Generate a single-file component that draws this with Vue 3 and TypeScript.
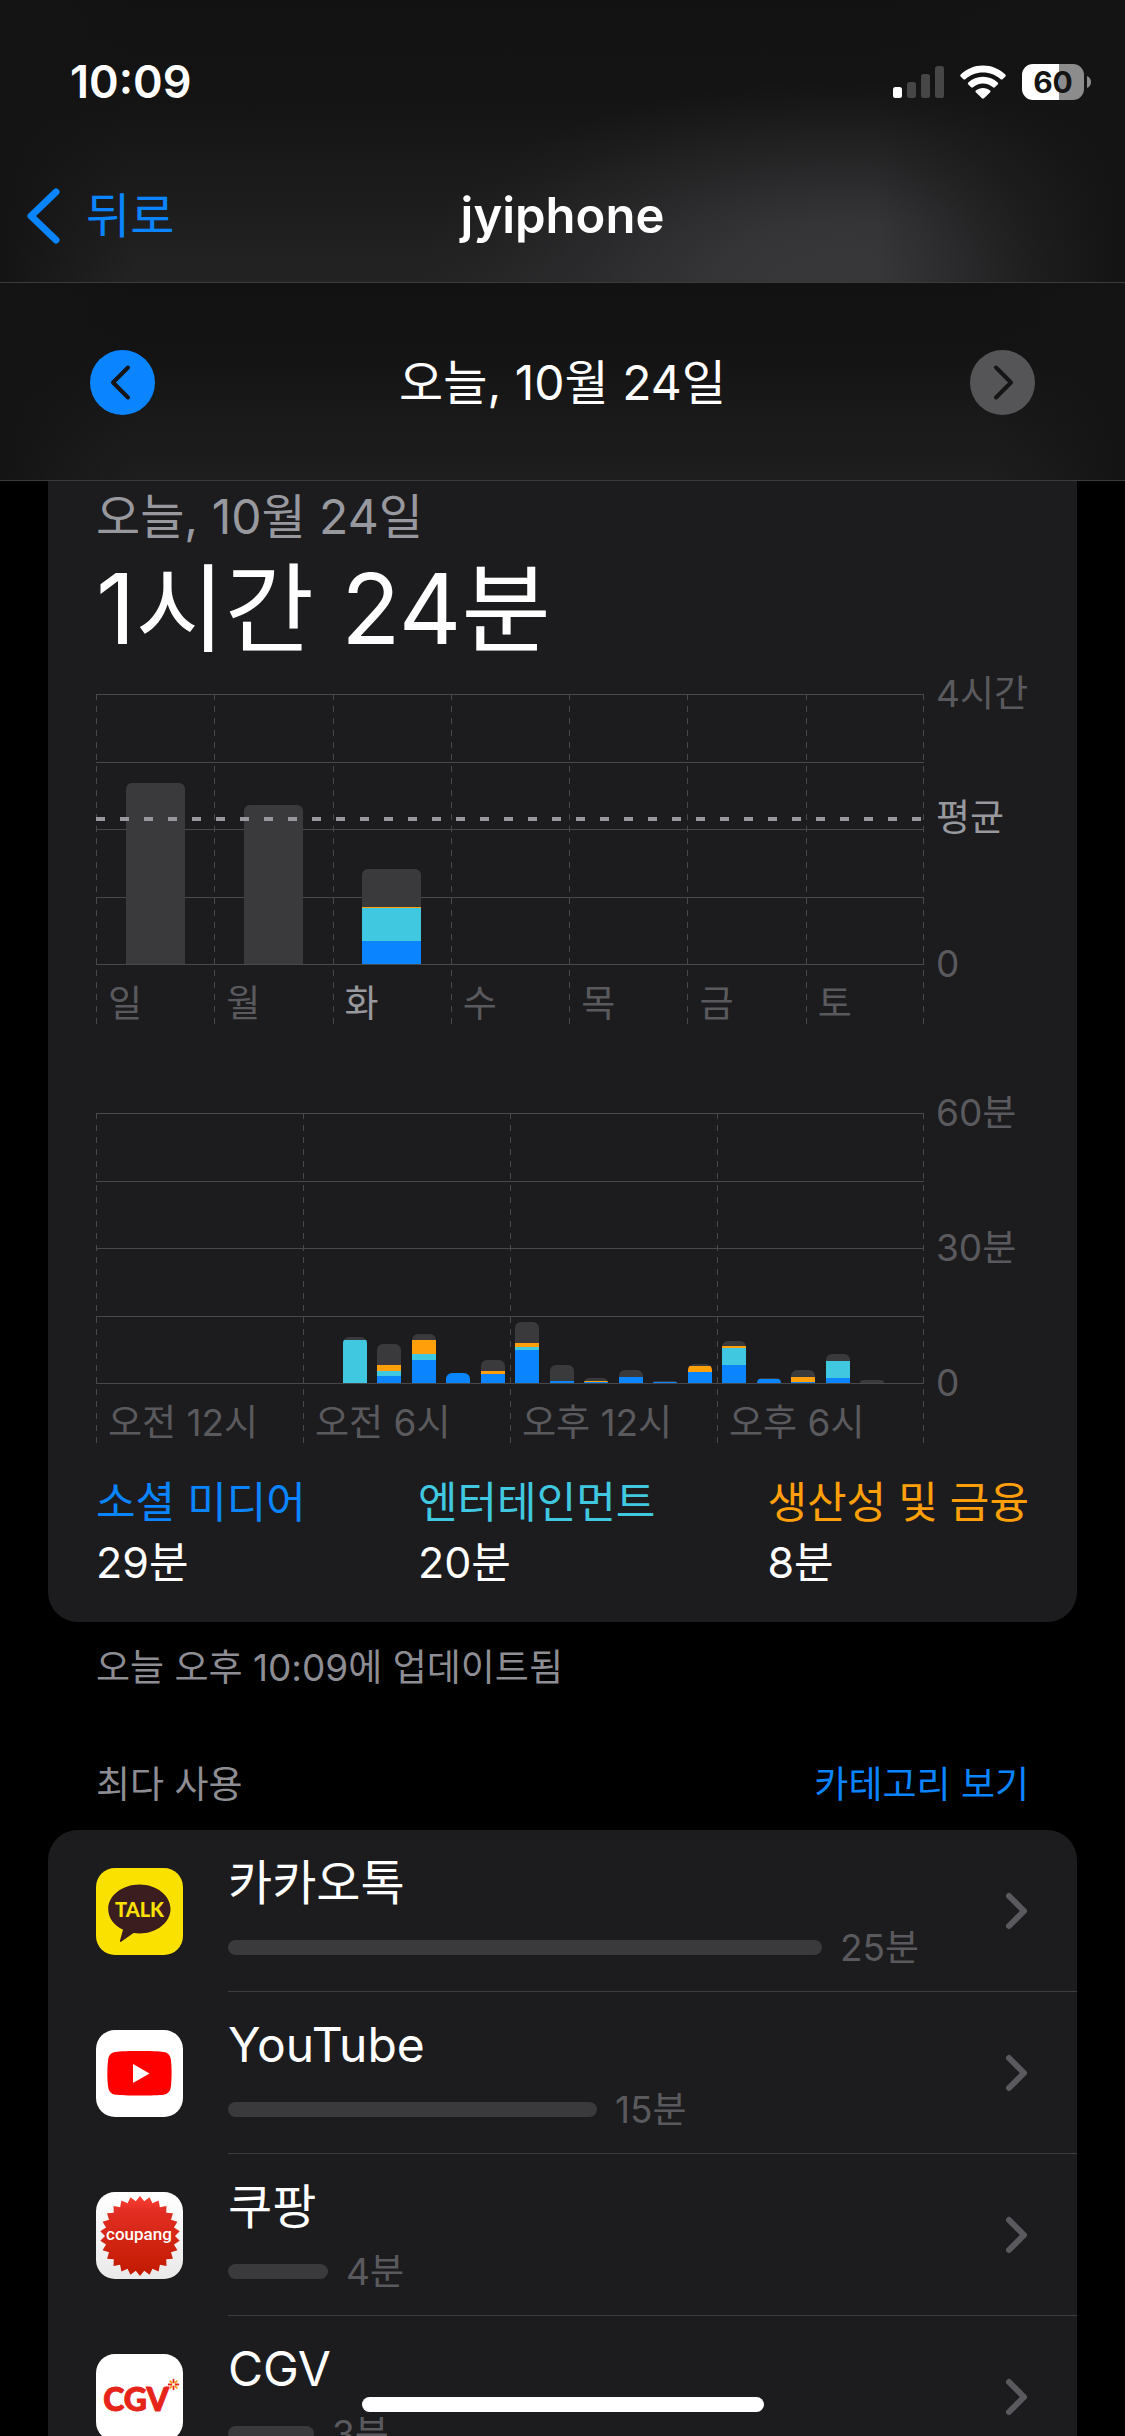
<script setup lang="ts">
type Kind = 'social' | 'fun' | 'work' | 'other'
interface Segment { kind: Kind; value: number }
interface Bar { label?: string; active?: boolean; segments: Segment[] }
interface AppUsage { id: string; name: string; time: string; share: number }

// Segment values are in axis units: the full height of a plot is 270 units.
const AXIS_UNITS = 270

const seg = (other: number, work = 0, fun = 0, social = 0): Segment[] =>
  ([
    { kind: 'other', value: other },
    { kind: 'work', value: work },
    { kind: 'fun', value: fun },
    { kind: 'social', value: social },
  ] as Segment[]).filter((s) => s.value > 0)

const week: Bar[] = [
  { label: '일', segments: seg(181) },
  { label: '월', segments: seg(159) },
  { label: '화', active: true, segments: seg(38, 1, 33, 23) },
  { label: '수', segments: [] },
  { label: '목', segments: [] },
  { label: '금', segments: [] },
  { label: '토', segments: [] },
]

const hourValues: Record<number, Segment[]> = {
  7: seg(3, 0, 43, 0),
  8: seg(21, 6, 5, 7),
  9: seg(6, 14, 6, 23),
  10: seg(0, 0, 0, 10),
  11: seg(11, 3, 0, 9),
  12: seg(21, 4, 3, 33),
  13: seg(16, 0, 0, 2),
  14: seg(3, 1, 0, 1),
  15: seg(7, 0, 0, 6),
  16: seg(1, 0, 0, 1),
  17: seg(2, 6, 0, 11),
  18: seg(5, 2, 17, 18),
  19: seg(1, 0, 0, 4),
  20: seg(7, 5, 0, 1),
  21: seg(7, 0, 17, 5),
  22: seg(3),
}

const quarters = ['오전 12시', '오전 6시', '오후 12시', '오후 6시'].map((label, q) => ({
  label,
  hours: Array.from({ length: 6 }, (_, i) => hourValues[q * 6 + i] ?? []),
}))

const legend = [
  { kind: 'social', name: '소셜 미디어', time: '29분' },
  { kind: 'fun', name: '엔터테인먼트', time: '20분' },
  { kind: 'work', name: '생산성 및 금융', time: '8분' },
]

const apps: AppUsage[] = [
  { id: 'kakao', name: '카카오톡', time: '25분', share: 594 },
  { id: 'youtube', name: 'YouTube', time: '15분', share: 369 },
  { id: 'coupang', name: '쿠팡', time: '4분', share: 100 },
  { id: 'cgv', name: 'CGV', time: '3분', share: 86 },
]

const total = (s: Segment[]) => s.reduce((sum, x) => sum + x.value, 0)
const barHeight = (s: Segment[]) => ({ height: `${(total(s) / AXIS_UNITS) * 100}%` })

const sealPoints = Array.from({ length: 52 }, (_, i) => {
  const r = i % 2 === 0 ? 40 : 35
  const a = (i * Math.PI) / 26 - Math.PI / 2
  return `${(44 + r * Math.cos(a)).toFixed(2)},${(44 + r * Math.sin(a)).toFixed(2)}`
}).join(' ')

const petals = Array.from({ length: 8 }, (_, i) => i * 45)
</script>

<template>
  <div class="screen">
    <header class="top">
      <div class="status">
        <span class="clock">10:09</span>
        <div class="indicators">
          <svg class="signal" viewBox="0 0 51 32" aria-hidden="true">
            <rect x="0" y="21" width="9" height="11" rx="2.5" fill="#fff" />
            <rect x="14" y="16" width="9" height="16" rx="2.5" fill="#464646" />
            <rect x="28" y="8" width="9" height="24" rx="2.5" fill="#464646" />
            <rect x="42" y="0" width="9" height="32" rx="2.5" fill="#464646" />
          </svg>
          <svg class="wifi" viewBox="0 0 46 34" aria-hidden="true">
            <path fill="#fff" d="M23 0.5C31.700 0.500 39.500 3.900 45.300 9.400C45.900 10 45.900 10.800 45.400 11.400L42.600 14.200C42 14.700 41.300 14.700 40.700 14.200C36 9.900 29.800 7.400 23 7.400C16.200 7.400 10 9.900 5.300 14.200C4.700 14.700 4 14.700 3.400 14.200L0.600 11.400C0.100 10.800 0.100 10 0.700 9.400C6.500 3.900 14.300 0.500 23 0.500Z" />
            <path fill="#fff" d="M23 11.800C28.700 11.800 33.800 13.900 37.700 17.500C38.300 18 38.300 18.800 37.700 19.400L34.800 22.300C34.300 22.800 33.600 22.800 33 22.300C30.300 20 26.800 18.600 23 18.600C19.200 18.600 15.700 20 13 22.300C12.400 22.800 11.700 22.800 11.200 22.300L8.300 19.400C7.700 18.800 7.700 18 8.300 17.500C12.200 13.900 17.300 11.800 23 11.800Z" />
            <path fill="#fff" d="M23 22.900C25.700 22.900 28.200 23.800 30.100 25.400C30.700 25.900 30.700 26.600 30.200 27.200L24 33.300C23.400 33.900 22.600 33.900 22 33.300L15.800 27.200C15.300 26.600 15.300 25.900 15.900 25.400C17.800 23.800 20.300 22.900 23 22.900Z" />
          </svg>
          <div class="battery">
            <span class="cell">60</span>
            <svg class="nub" viewBox="0 0 4 12" aria-hidden="true"><path d="M0 0C2.500 1 4 3.200 4 6S2.500 11 0 12Z" fill="#8c8c8c" /></svg>
          </div>
        </div>
      </div>
      <nav class="nav">
        <a class="back" href="#">
          <svg viewBox="0 0 34 56" aria-hidden="true"><path d="M30 4L5 28L30 52" /></svg>
          <span>뒤로</span>
        </a>
        <h1 class="title">jyiphone</h1>
      </nav>
    </header>

    <div class="day-bar">
      <button class="step" type="button" aria-label="이전">
        <svg viewBox="0 0 65 65" aria-hidden="true"><path d="M38 17.500L23 32.500L38 47.500" /></svg>
      </button>
      <p class="day">오늘, 10월 24일</p>
      <button class="step off" type="button" aria-label="다음" disabled>
        <svg viewBox="0 0 65 65" aria-hidden="true"><path d="M26 17.500L41 32.500L26 47.500" /></svg>
      </button>
    </div>

    <main class="content">
      <section class="card">
        <p class="date">오늘, 10월 24일</p>
        <h2 class="total">1시간 24분</h2>

        <div class="chart">
          <div class="plot">
            <div class="lines"><i v-for="n in 5" :key="n" /></div>
            <div v-for="bar in week" :key="bar.label" class="column">
              <div class="well">
                <div class="slot">
                  <div class="bar weekday-bar" :style="barHeight(bar.segments)">
                    <i v-for="s in bar.segments" :key="s.kind" :class="s.kind" :style="{ flexGrow: s.value }" />
                  </div>
                </div>
              </div>
              <span class="tick" :class="{ active: bar.active }">{{ bar.label }}</span>
            </div>
            <div class="average" />
          </div>
          <div class="axis">
            <span class="top-mark">4시간</span>
            <span class="average-mark">평균</span>
            <span class="zero-mark">0</span>
          </div>
        </div>

        <div class="chart second">
          <div class="plot">
            <div class="lines"><i v-for="n in 5" :key="n" /></div>
            <div v-for="q in quarters" :key="q.label" class="column">
              <div class="well">
                <div v-for="(h, i) in q.hours" :key="i" class="slot">
                  <div class="bar hour-bar" :style="barHeight(h)">
                    <i v-for="s in h" :key="s.kind" :class="s.kind" :style="{ flexGrow: s.value }" />
                  </div>
                </div>
              </div>
              <span class="tick">{{ q.label }}</span>
            </div>
          </div>
          <div class="axis">
            <span class="top-mark">60분</span>
            <span class="half-mark">30분</span>
            <span class="zero-mark">0</span>
          </div>
        </div>

        <dl class="legend">
          <div v-for="l in legend" :key="l.kind">
            <dt :class="'ink-' + l.kind">{{ l.name }}</dt>
            <dd>{{ l.time }}</dd>
          </div>
        </dl>
      </section>

      <p class="updated">오늘 오후 10:09에 업데이트됨</p>

      <div class="section-head">
        <h3>최다 사용</h3>
        <button type="button">카테고리 보기</button>
      </div>

      <ul class="list">
        <li v-for="app in apps" :key="app.id">
          <a class="row" href="#">
            <svg v-if="app.id === 'kakao'" class="icon" viewBox="0 0 87 87" aria-hidden="true">
              <rect width="87" height="87" rx="19" fill="#fae100" />
              <path fill="#3b1c1f" d="M43.500 16.500C60.500 16.500 74.500 27.500 74.500 41S60.500 65.500 43.500 65.500C41.500 65.500 39.500 65.400 37.500 65.100L25.500 73.600C24.500 74.200 23.700 73.800 24 72.600L27 61.800C18.200 57.700 12.200 50 12.200 41C12.200 27.500 26.500 16.500 43.500 16.500Z" />
              <text x="43.500" y="48.500" class="talk">TALK</text>
            </svg>
            <svg v-else-if="app.id === 'youtube'" class="icon" viewBox="0 0 87 87" aria-hidden="true">
              <rect width="87" height="87" rx="19" fill="#fff" />
              <path fill="#f00" d="M43.500 21C53 21 63 21.200 67.500 21.900C71.800 22.500 74.200 25 74.800 29.300C75.900 37.500 75.900 49 74.800 57.200C74.200 61.500 71.800 64 67.500 64.700C61 65.700 26 65.700 19.500 64.700C15.200 64 12.800 61.500 12.200 57.200C11.100 49 11.100 37.500 12.200 29.300C12.800 25 15.200 22.500 19.500 21.900C24 21.200 34 21 43.500 21Z" />
              <path fill="#fff" d="M37 34L53.500 43.500L37 53Z" />
            </svg>
            <svg v-else-if="app.id === 'coupang'" class="icon" viewBox="0 0 87 87" aria-hidden="true">
              <defs>
                <linearGradient id="paper" x2="0" y2="1"><stop stop-color="#fff" /><stop offset="1" stop-color="#e9e9e9" /></linearGradient>
                <linearGradient id="seal" x2="0" y2="1"><stop stop-color="#f93e33" /><stop offset="0.200" stop-color="#e22d22" /><stop offset="1" stop-color="#c01a00" /></linearGradient>
              </defs>
              <rect width="87" height="87" rx="19" fill="url(#paper)" />
              <polygon :points="sealPoints" fill="url(#seal)" />
              <text x="43" y="48" class="coupang">coupang</text>
            </svg>
            <svg v-else class="icon" viewBox="0 0 87 87" aria-hidden="true">
              <rect width="87" height="87" rx="19" fill="#fff" />
              <text x="40" y="56.500" class="cgv">CGV</text>
              <g transform="translate(77.500 30.500)" stroke-width="1.800" stroke-linecap="round">
                <line v-for="a in petals" :key="a" x1="0" y1="-2.200" x2="0" y2="-4.800" :stroke="a % 90 ? '#f39a1d' : '#e6241a'" :transform="`rotate(${a})`" />
              </g>
            </svg>
            <div class="info">
              <span class="name">{{ app.name }}</span>
              <span class="usage">
                <i class="meter" :style="{ width: `${(app.share / 770) * 100}%` }" />
                <span>{{ app.time }}</span>
              </span>
            </div>
            <svg class="chevron" viewBox="0 0 21 38" aria-hidden="true"><path d="M3 4L18 19L3 34" /></svg>
          </a>
        </li>
      </ul>
    </main>
    <div class="home" />
  </div>
</template>

<style>
body {
  background: #000;
}
</style>

<style scoped>
.screen {
  position: relative;
  display: flex;
  flex-direction: column;
  height: 100vh;
  overflow: hidden;
  background: #000;
  color: #fff;
  font-family: Inter, "Noto Sans CJK KR", sans-serif;
  font-size: 48px;
  line-height: 60px;
}
p, h1, h2, h3, dl, dd, ul {
  margin: 0;
  padding: 0;
  font-weight: 400;
}
a {
  color: inherit;
  text-decoration: none;
}
button {
  padding: 0;
  border: 0;
  background: none;
  font: inherit;
}
svg {
  display: block;
  flex: none;
}

.top {
  flex: none;
  border-bottom: 1px solid #3b3b3d;
  background:
    linear-gradient(90deg, #141414 0%, transparent 12%, transparent 78%, #141414b0 93%, #141414 100%),
    radial-gradient(ellipse 38% 72% at 75% 100%, #38383b 0%, #38383bd8 30%, #38383b66 60%, #38383b1c 85%, transparent 100%),
    linear-gradient(#121212 0%, #141414 35%, #232324 100%);
}
.status {
  display: flex;
  align-items: center;
  justify-content: space-between;
  height: 164px;
  padding: 0 34px 0 70px;
}
.clock {
  font-size: 45px;
  font-weight: 600;
}
.indicators {
  display: flex;
  align-items: center;
  gap: 16px;
}
.signal {
  width: 51px;
  height: 32px;
}
.wifi {
  width: 46px;
  height: 34px;
}
.battery {
  display: flex;
  align-items: center;
  gap: 3px;
}
.cell {
  width: 62px;
  height: 36px;
  border-radius: 11px;
  background: linear-gradient(90deg, #fff 60%, #8c8c8c 60%);
  color: #141414;
  font-size: 30px;
  font-weight: 700;
  line-height: 36px;
  text-align: center;
}
.nub {
  width: 4px;
  height: 12px;
}
.nav {
  display: grid;
  grid-template-columns: 1fr auto 1fr;
  align-items: center;
  height: 104px;
  padding: 0 26px 14px;
}
.back {
  display: flex;
  align-items: center;
  gap: 26px;
  color: #0a84ff;
}
.back svg {
  width: 34px;
  height: 56px;
}
.back path {
  fill: none;
  stroke: #0a84ff;
  stroke-width: 7;
  stroke-linecap: round;
  stroke-linejoin: round;
}
.title {
  font-size: 49px;
  font-weight: 600;
}

.day-bar {
  display: flex;
  flex: none;
  align-items: center;
  justify-content: space-between;
  box-sizing: border-box;
  height: 198px;
  padding: 2px 90px 0;
  border-bottom: 1px solid #3b3b3d;
  background:
    linear-gradient(90deg, #141414 0%, transparent 12%, transparent 88%, #141414 100%),
    linear-gradient(#121212 0%, #131313 30%, #1e1e1f 100%);
}
.step {
  width: 65px;
  height: 65px;
  border-radius: 50%;
  background: #0a84ff;
}
.step.off {
  background: #555557;
}
.step path {
  fill: none;
  stroke: #151516;
  stroke-width: 4;
  stroke-linecap: round;
  stroke-linejoin: round;
}

.content {
  flex: 1;
  min-height: 0;
  padding: 0 48px;
  overflow: hidden;
}
.card {
  padding: 6px 48px 30px;
  border-radius: 0 0 30px 30px;
  background: #1c1c1e;
}
.date {
  color: #98989f;
}
.total {
  padding-top: 2px;
  font-size: 97px;
  line-height: 120px;
}

.chart {
  display: flex;
  margin-top: 25px;
  font-size: 37px;
}
.chart.second {
  margin-top: 89px;
}
.plot {
  position: relative;
  display: flex;
  flex: 1;
  height: 330px;
}
.plot::after {
  content: "";
  position: absolute;
  top: 0;
  right: 0;
  bottom: 0;
  width: 1px;
  background: repeating-linear-gradient(#48484a 0 6px, transparent 6px 12px);
}
.lines {
  position: absolute;
  inset: 0 0 auto;
  display: flex;
  flex-direction: column;
  justify-content: space-between;
  height: 271px;
}
.lines i {
  height: 1px;
  background: #48484a;
}
.column {
  position: relative;
  flex: 1;
  background: repeating-linear-gradient(#48484a 0 6px, transparent 6px 12px) left / 1px 100% no-repeat;
}
.well {
  display: flex;
  height: 270px;
}
.slot {
  display: flex;
  flex: 1;
  align-items: flex-end;
  justify-content: center;
}
.bar {
  display: flex;
  flex-direction: column;
  border-radius: 6px 6px 0 0;
  overflow: hidden;
}
.weekday-bar {
  width: 50%;
}
.hour-bar {
  width: 70%;
}
.bar i {
  flex-basis: 0;
}
.social { background: #0a84ff; }
.fun { background: #40c8e0; }
.work { background: #ff9f0a; }
.other { background: #3a3a3c; }
.ink-social { color: #0a84ff; }
.ink-fun { color: #40c8e0; }
.ink-work { color: #ff9f0a; }
.tick {
  display: block;
  padding: 16px 0 0 12px;
  color: #5a5a5e;
  line-height: 48px;
  white-space: nowrap;
}
.tick.active {
  color: #98989f;
}
.average {
  position: absolute;
  top: 123px;
  left: 0;
  right: 0;
  height: 4px;
  background: repeating-linear-gradient(90deg, #98989d 0 9px, transparent 9px 24px);
}
.axis {
  position: relative;
  width: 105px;
  color: #5a5a5e;
  line-height: 48px;
  white-space: nowrap;
}
.axis span {
  position: absolute;
  left: 12px;
}
.axis .top-mark { top: -24px; }
.axis .average-mark {
  top: 100px;
  color: #98989f;
}
.axis .half-mark { top: 111px; }
.axis .zero-mark { top: 246px; }

.legend {
  display: flex;
  justify-content: space-between;
  margin-top: 29px;
  font-size: 43px;
}

.updated {
  margin-top: 21px;
  padding: 0 48px;
  color: #8d8d93;
  font-size: 37px;
  line-height: 50px;
}
.section-head {
  display: flex;
  justify-content: space-between;
  margin: 67px 0 20px;
  padding: 0 48px;
  font-size: 37px;
  line-height: 50px;
}
.section-head h3 {
  color: #8d8d93;
  font-size: 37px;
}
.section-head button {
  color: #0a84ff;
}

.list {
  border-radius: 30px 30px 0 0;
  background: #1c1c1e;
  list-style: none;
}
.row {
  display: flex;
  align-items: center;
  height: 162px;
  padding-left: 48px;
  background: linear-gradient(#3d3d40, #3d3d40) 180px 100% / 100% 1px no-repeat;
}
.icon {
  width: 87px;
  height: 87px;
}
.info {
  display: flex;
  flex: 1;
  flex-direction: column;
  gap: 10px;
  margin-left: 45px;
  padding-top: 3px;
}
.usage {
  display: flex;
  align-items: center;
  gap: 18px;
  color: #5a5a5e;
  font-size: 37px;
  line-height: 50px;
}
.meter {
  height: 15px;
  border-radius: 8px;
  background: #3a3a3c;
}
.chevron {
  width: 21px;
  height: 38px;
  margin: 0 50px 0 8px;
}
.chevron path {
  fill: none;
  stroke: #5a5a5e;
  stroke-width: 6;
  stroke-linecap: round;
  stroke-linejoin: round;
}
.talk {
  fill: #fae100;
  font-family: Lato, sans-serif;
  font-size: 20px;
  font-weight: 900;
  text-anchor: middle;
}
.coupang {
  fill: #fff;
  font-family: Roboto, sans-serif;
  font-size: 17px;
  font-weight: 500;
  text-anchor: middle;
}
.cgv {
  fill: #e6241a;
  stroke: #e6241a;
  stroke-width: 1;
  stroke-linejoin: round;
  font-family: Lato, sans-serif;
  font-size: 32px;
  font-weight: 900;
  text-anchor: middle;
}
.home {
  position: absolute;
  bottom: 24px;
  left: 50%;
  width: 402px;
  height: 15px;
  margin-left: -201px;
  border-radius: 8px;
  background: #fff;
}
</style>
